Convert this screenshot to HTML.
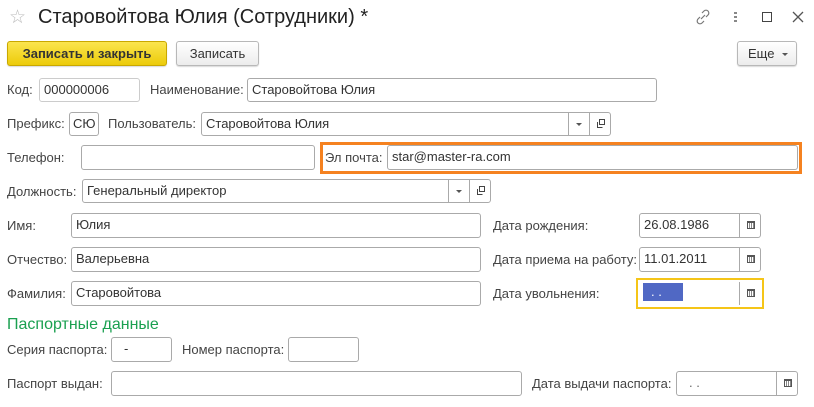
<!DOCTYPE html>
<html><head><meta charset="utf-8"><style>
*{box-sizing:border-box}
body{margin:0;width:814px;height:407px;background:#fff;font-family:"Liberation Sans",Arial,sans-serif;font-size:13px;color:#404040;position:relative;overflow:hidden}
.a{position:absolute}
.l{position:absolute;line-height:16px;color:#444}
.i{position:absolute;border:1px solid #aaa;border-radius:3px;background:#fff;color:#333;line-height:22px;padding-left:4px;white-space:nowrap}
.b{position:absolute;top:0;bottom:0;border-left:1px solid #aaa;width:21px}
.btn{position:absolute;border:1px solid #b8b8b8;border-radius:3px;background:linear-gradient(#fff,#ececec);text-align:center;line-height:23px;color:#333;box-shadow:0 1px 1px rgba(0,0,0,.15)}
.cal{position:absolute;left:7px;top:7px;width:8px;height:8px;border:1px solid #555;border-top-width:2px;background:repeating-linear-gradient(90deg,#fff 0 1px,#888 1px 2px)}
.dd{position:absolute;left:7px;top:10px;border-left:3px solid transparent;border-right:3px solid transparent;border-top:3px solid #555}
.op{position:absolute;left:6px;top:6px;width:9px;height:9px}
</style></head><body>
<div class="a" style="left:9px;top:6px;font-size:19px;color:#bbb">☆</div>
<div class="a" style="left:38px;top:6px;font-size:20px;color:#222">Старовойтова Юлия (Сотрудники) *</div>
<svg class="a" style="left:695px;top:9px" width="16" height="16" viewBox="0 0 16 16" fill="none" stroke="#777" stroke-width="1.2"><path d="M7 4l2-2a2.8 2.8 0 0 1 4 4l-2 2M9 12l-2 2a2.8 2.8 0 0 1-4-4l2-2M6 10l4-4"/></svg>
<div class="a" style="left:734px;top:12px;width:3px;height:11px;background:repeating-linear-gradient(#888 0 2px,transparent 2px 4px)"></div>
<div class="a" style="left:762px;top:12px;width:10px;height:10px;border:1.5px solid #444"></div>
<svg class="a" style="left:792px;top:11px" width="12" height="12"><path d="M1 1L11 11M11 1L1 11" stroke="#555" stroke-width="1.3"/></svg>

<div class="btn" style="left:7px;top:41px;width:160px;height:25px;background:linear-gradient(#fbe54e,#eccb0a);border-color:#c9a800;font-weight:bold;color:#333">Записать и закрыть</div>
<div class="btn" style="left:176px;top:41px;width:83px;height:25px">Записать</div>
<div class="btn" style="left:737px;top:41px;width:60px;height:25px;text-align:left;padding-left:10px">Еще <span style="display:inline-block;border-left:3px solid transparent;border-right:3px solid transparent;border-top:3px solid #555;vertical-align:middle;margin-left:4px"></span></div>

<div class="l" style="left:7px;top:82px">Код:</div>
<div class="i" style="left:39px;top:78px;width:101px;height:24px;border-color:#ccc">000000006</div>
<div class="l" style="left:150px;top:82px">Наименование:</div>
<div class="i" style="left:247px;top:78px;width:410px;height:24px">Старовойтова Юлия</div>

<div class="l" style="left:7px;top:116px">Префикс:</div>
<div class="i" style="left:69px;top:112px;width:30px;height:24px;padding-left:3px">СЮ</div>
<div class="l" style="left:108px;top:116px">Пользователь:</div>
<div class="i" style="left:201px;top:112px;width:410px;height:24px">Старовойтова Юлия<div class="b" style="right:21px"><div class="dd"></div></div><div class="b" style="right:0"><svg class="op" viewBox="0 0 9 9" fill="none" stroke="#444"><path d="M3.5.5h5v5h-5zM1.5 3v5.5h5"/></svg></div></div>

<div class="l" style="left:7px;top:150px">Телефон:</div>
<div class="i" style="left:81px;top:145px;width:234px;height:25px"></div>
<div class="a" style="left:320px;top:142px;width:482px;height:32px;border:3px solid #f58220"></div>
<div class="l" style="left:325px;top:150px">Эл почта:</div>
<div class="i" style="left:387px;top:145px;width:411px;height:25px">star@master-ra.com</div>

<div class="l" style="left:7px;top:184px">Должность:</div>
<div class="i" style="left:82px;top:179px;width:409px;height:24px">Генеральный директор<div class="b" style="right:21px"><div class="dd"></div></div><div class="b" style="right:0"><svg class="op" viewBox="0 0 9 9" fill="none" stroke="#444"><path d="M3.5.5h5v5h-5zM1.5 3v5.5h5"/></svg></div></div>

<div class="l" style="left:7px;top:218px">Имя:</div>
<div class="i" style="left:71px;top:213px;width:410px;height:25px">Юлия</div>
<div class="l" style="left:493px;top:218px">Дата рождения:</div>
<div class="i" style="left:639px;top:213px;width:122px;height:25px">26.08.1986<div class="b" style="right:0"><div class="cal"></div></div></div>

<div class="l" style="left:7px;top:252px">Отчество:</div>
<div class="i" style="left:71px;top:247px;width:410px;height:25px">Валерьевна</div>
<div class="l" style="left:493px;top:252px">Дата приема на работу:</div>
<div class="i" style="left:639px;top:247px;width:122px;height:25px">11.01.2011<div class="b" style="right:0"><div class="cal"></div></div></div>

<div class="l" style="left:7px;top:286px">Фамилия:</div>
<div class="i" style="left:71px;top:281px;width:410px;height:25px">Старовойтова</div>
<div class="l" style="left:493px;top:286px">Дата увольнения:</div>
<div class="a" style="left:636px;top:278px;width:128px;height:31px;border:2px solid #f5c518"></div>
<div class="a" style="left:643px;top:283px;width:40px;height:18px;background:#5068c4;color:#fff;line-height:18px;padding-left:8px">. .</div>
<div class="a" style="left:739px;top:282px;width:21px;height:23px;border-left:1px solid #aaa"><div class="cal"></div></div>

<div class="a" style="left:7px;top:316px;font-size:16px;color:#1aa050">Паспортные данные</div>

<div class="l" style="left:7px;top:342px">Серия паспорта:</div>
<div class="i" style="left:111px;top:337px;width:61px;height:25px;padding-left:12px">-</div>
<div class="l" style="left:182px;top:342px">Номер паспорта:</div>
<div class="i" style="left:288px;top:337px;width:71px;height:25px"></div>

<div class="l" style="left:7px;top:376px">Паспорт выдан:</div>
<div class="i" style="left:111px;top:371px;width:411px;height:25px"></div>
<div class="l" style="left:532px;top:376px">Дата выдачи паспорта:</div>
<div class="i" style="left:676px;top:371px;width:122px;height:25px;padding-left:12px;color:#666">. .<div class="b" style="right:0"><div class="cal"></div></div></div>
</body></html>
